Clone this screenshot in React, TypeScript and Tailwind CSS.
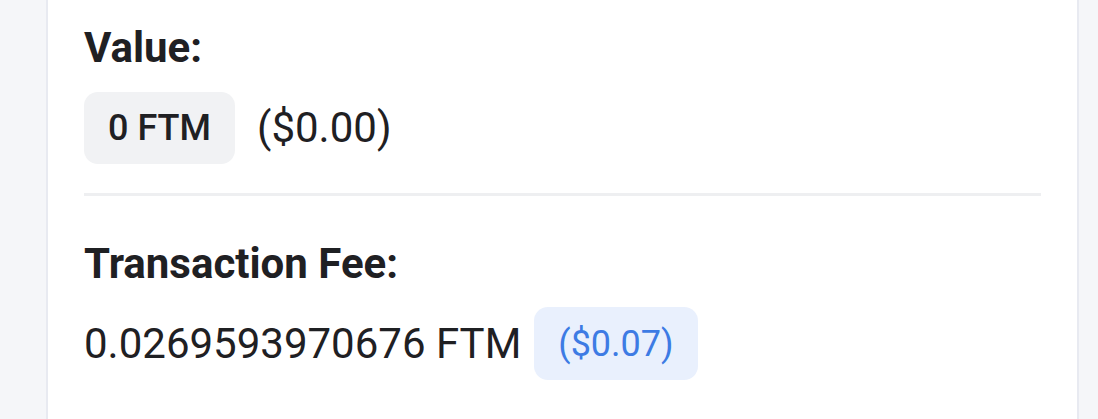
import React from 'react';

const font = { fontFamily: 'Roboto, "Noto Sans", sans-serif' };

export default function App() {
    return (
        <div style={font} className="h-[419px] w-[1098px] overflow-hidden bg-[#f5f6f9] pl-[46px] pr-[19px] text-[#1f2023]">
            <div className="h-full border-x-2 border-[#e8eaf1] bg-white pl-[36px] pr-[36px] pt-[23px]">
                {/* Value */}
                <h3 className="text-[42px] leading-[50px] font-bold">Value:</h3>
                <div className="mt-[19px] flex items-center">
                    <span className="flex h-[72px] items-center rounded-[14px] bg-[#f1f2f4] px-[24px] text-[36px] font-medium">
                        0 FTM
                    </span>
                    <span className="ml-[22px] text-[42px] leading-[50px]">($0.00)</span>
                </div>

                <div className="mt-[29px] h-[3px] bg-[#eeeff1]" />

                {/* Transaction fee */}
                <h3 className="mt-[43px] text-[42px] leading-[50px] font-bold">Transaction Fee:</h3>
                <div className="mt-[18px] flex items-center">
                    <span className="text-[42px] leading-[50px]">0.0269593970676 FTM</span>
                    <span className="ml-[13px] flex h-[73px] items-center rounded-[14px] bg-[#e9f0fd] px-[24px] text-[36px] text-[#3d7be4]">
                        ($0.07)
                    </span>
                </div>
            </div>
        </div>
    );
}
